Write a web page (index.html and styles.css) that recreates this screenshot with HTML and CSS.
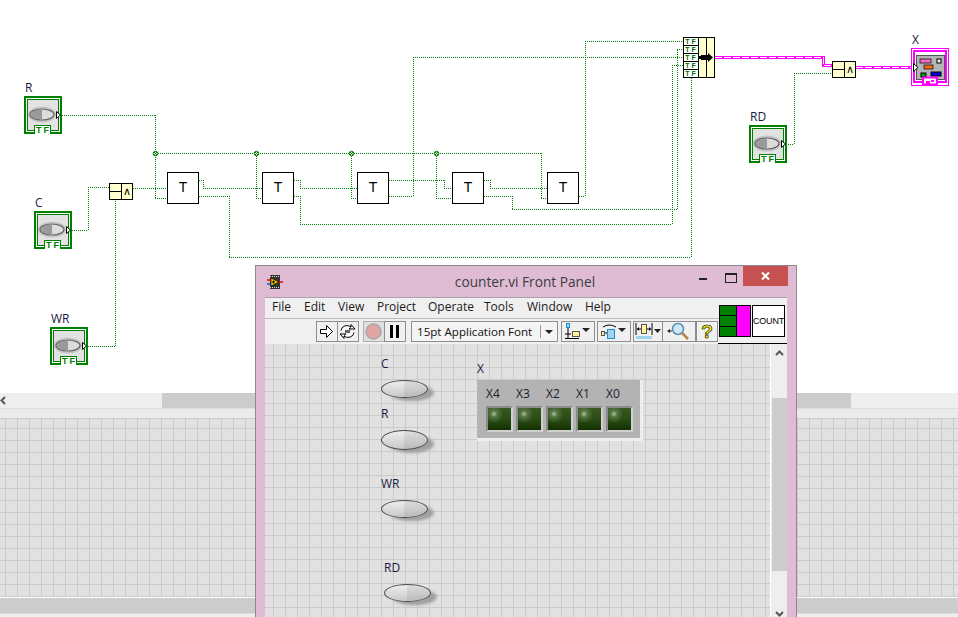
FILE: index.html
```html
<!DOCTYPE html>
<html lang="en">
<head>
<meta charset="utf-8">
<title>counter.vi Block Diagram</title>
<link rel="stylesheet" href="styles.css">
</head>
<body>
<svg class="defs" width="0" height="0" aria-hidden="true">
  <defs>
    <g id="bool-term">
      <rect x="1" y="1" width="36" height="36" fill="#fff" stroke="#008000" stroke-width="2"/>
      <rect x="3.500" y="3.500" width="31" height="31" fill="#e2e2e2" stroke="#008000"/>
      <ellipse cx="18" cy="18.500" rx="14" ry="8" fill="#bdbdbd" opacity=".8"/>
      <ellipse cx="18" cy="18.500" rx="12" ry="5.500" fill="#dcdcdc" stroke="#666" stroke-width="1.200"/>
      <path d="M18 13.500a11 5 0 0 0 0 10z" fill="#9a9a9a"/>
      <path d="M32.500 15.500l4 3.500-4 3.500z" fill="#fff" stroke="#000"/>
    </g>
    <g id="junction">
      <circle r="2.300" fill="#e8f4e8" stroke="#008000"/>
      <path d="M-1.500-1.500l3 3M1.500-1.500l-3 3" stroke="#008000" fill="none"/>
    </g>
  </defs>
</svg>

<main class="diagram">
  <svg class="wires" width="958" height="393" viewBox="0 0 958 393">
    <g class="wire">
      <path d="M62 115.500H155M155.500 115V198M155 198.500H167"/>
      <path d="M156 153.500H541M541.500 153V198M541 198.500H547"/>
      <path d="M256.500 156V198M256 198.500H262"/>
      <path d="M351.500 156V198M351 198.500H357"/>
      <path d="M436.500 156V198M436 198.500H452"/>
      <path d="M72 230.500H88M88.500 230V187M88 187.500H109"/>
      <path d="M88 346.500H115M115.500 346V200"/>
      <path d="M133 188.500H167"/>
      <path d="M199 180.500H203M203.500 180V188M203 188.500H262"/>
      <path d="M199 196.500H229M229.500 196V257M229 257.500H691M691.500 257V78"/>
      <path d="M294 180.500H300M300.500 180V188M300 188.500H357"/>
      <path d="M294 196.500H300M300.500 196V224M300 224.500H672M672.500 224V65M672 65.500H683"/>
      <path d="M389 180.500H444M444.500 180V188M444 188.500H452"/>
      <path d="M389 196.500H413M413.500 196V57M413 57.500H683"/>
      <path d="M484 180.500H490M490.500 180V188M490 188.500H547"/>
      <path d="M484 196.500H512M512.500 196V209M512 209.500H677M677.500 209V49M677 49.500H683"/>
      <path d="M579 196.500H585M585.500 196V41M585 41.500H683"/>
      <path d="M786 144.500H794M794.500 144V73M794 73.500H832"/>
    </g>
    <g class="cluster-wire">
      <path d="M715 57.500H823.500V65.500H832"/>
      <path d="M856 67.500H912"/>
    </g>
    <g class="cluster-wire-core">
      <path d="M715 57.500H823.500V65.500H832"/>
      <path d="M856 67.500H912"/>
    </g>
    <use href="#junction" x="155.500" y="153.500"/>
    <use href="#junction" x="256.500" y="153.500"/>
    <use href="#junction" x="351.500" y="153.500"/>
    <use href="#junction" x="436.500" y="153.500"/>
  </svg>

  <div class="node term term-r"><span class="node-label">R</span><svg width="38" height="38"><use href="#bool-term"/></svg><span class="tf-tag">TF</span></div>
  <div class="node term term-c"><span class="node-label">C</span><svg width="38" height="38"><use href="#bool-term"/></svg><span class="tf-tag">TF</span></div>
  <div class="node term term-wr"><span class="node-label">WR</span><svg width="38" height="38"><use href="#bool-term"/></svg><span class="tf-tag">TF</span></div>
  <div class="node term term-rd"><span class="node-label">RD</span><svg width="38" height="38"><use href="#bool-term"/></svg><span class="tf-tag">TF</span></div>

  <div class="node term term-x"><span class="node-label">X</span>
    <svg width="38" height="38">
      <rect x=".5" y=".5" width="37" height="37" fill="#fff" stroke="#f0f"/>
      <rect x="3" y="3" width="32" height="31" fill="#fff" stroke="#f0f" stroke-width="2"/>
      <rect x="5.500" y="7.500" width="28" height="24" fill="#b4b4b4" stroke="#555"/>
      <rect x="9" y="11" width="11" height="4" fill="#f06cc0" stroke="#000" stroke-width=".7"/>
      <rect x="13" y="17" width="9" height="4" fill="#f26a21" stroke="#000" stroke-width=".7"/>
      <rect x="26" y="11" width="4" height="4" fill="#eee" stroke="#000"/>
      <rect x="10" y="25" width="5" height="4" fill="#00a000" stroke="#000"/>
      <rect x="20" y="24" width="10" height="4" fill="#0000e0" stroke="#000"/>
      <rect x="12" y="29.500" width="14" height="7" fill="#fff" stroke="#f0f" stroke-width="2"/>
      <path d="M15 33h4v3h-4zM20 32h3v2h-3z" fill="#f0f"/>
      <path d="M2.500 15.500l4.500 4-4.500 4z" fill="#fff" stroke="#000"/>
    </svg>
  </div>

  <div class="node and and-1"><span class="and-inputs"><i></i><i></i></span><span class="and-op">∧</span></div>
  <div class="node and and-2"><span class="and-inputs"><i></i><i></i></span><span class="and-op">∧</span></div>

  <div class="node tff tff-1">T</div>
  <div class="node tff tff-2">T</div>
  <div class="node tff tff-3">T</div>
  <div class="node tff tff-4">T</div>
  <div class="node tff tff-5">T</div>

  <div class="node build">
    <div class="build-rows">
      <span>TF</span><span>TF</span><span>TF</span><span>TF</span><span>TF</span>
    </div>
    <div class="build-col"></div>
    <div class="build-col"></div>
    <svg class="build-arrow" width="16" height="9" viewBox="0 0 16 9"><path d="M0 3h3V2h7V0l5 4.500-5 4.500V7H3V6H0z" fill="#000"/></svg>
  </div>
</main>

<section class="back-window">
  <div class="hscroll top-scroll">
    <svg class="arrow-left" width="6" height="9" viewBox="0 0 6 9"><path d="M5 1L1.500 4.500 5 8" fill="none" stroke="#555" stroke-width="2"/></svg>
    <div class="thumb"></div>
  </div>
  <div class="band"></div>
  <div class="grid-lower"></div>
  <div class="hscroll bottom-scroll"></div>
</section>

<section class="window">
  <header class="titlebar">
    <svg class="vi-icon" width="16" height="14" viewBox="0 0 16 14">
      <path d="M3 0h10v14H3z" fill="#333"/>
      <path d="M3.500 1v1M5.500 1v1M7.500 1v1M9.500 1v1M11.500 1v1M3.500 12v1M5.500 12v1M7.500 12v1M9.500 12v1M11.500 12v1" stroke="#ddd"/>
      <path d="M4 3l8 4-8 4z" fill="#f5d800" stroke="#000" stroke-width=".7"/>
      <path d="M0 5h4" stroke="#e00" stroke-width="1.500"/>
      <path d="M0 9h4" stroke="#15c" stroke-width="1.500"/>
      <path d="M12 7h4" stroke="#e00" stroke-width="1.500"/>
      <path d="M5 7h3M6.500 5.500v3" stroke="#000"/>
    </svg>
    <h1 class="title">counter.vi Front Panel</h1>
    <div class="win-controls">
      <span class="win-min"></span>
      <span class="win-max"></span>
      <span class="win-close"><svg width="11" height="10" viewBox="0 0 11 10"><path d="M2 1.500l7 7M9 1.500l-7 7" stroke="#fff" stroke-width="2" fill="none"/></svg></span>
    </div>
  </header>

  <div class="client">
    <nav class="menubar">
      <span>File</span><span>Edit</span><span>View</span><span>Project</span><span>Operate</span><span>Tools</span><span>Window</span><span>Help</span>
    </nav>

    <div class="toolbar">
      <div class="tool-group">
        <button class="tool">
          <svg width="15" height="15" viewBox="0 0 15 15"><path d="M1.500 5.500h6v-4l6 6-6 6v-4h-6z" fill="#fff" stroke="#000"/></svg>
        </button>
        <button class="tool">
          <svg width="19" height="17" viewBox="0 0 19 17"><path d="M3 7.500a6 5.500 0 0 1 10-3.500V1.500l4 4.500h-6l2-1.500" fill="#fff" stroke="#000"/><path d="M16 9.500a6 5.500 0 0 1-10 3.500v2.500l-4-4.500h6l-2 1.500" fill="#fff" stroke="#000"/><path d="M7 7h5v3H7z" fill="#666"/></svg>
        </button>
      </div>
      <div class="tool-group">
        <button class="tool tool-off">
          <svg width="17" height="17" viewBox="0 0 17 17"><circle cx="8.500" cy="8.500" r="7.500" fill="#e2a4a4" stroke="#a8a8a8" stroke-width="1.500"/></svg>
        </button>
        <button class="tool">
          <svg width="11" height="13" viewBox="0 0 11 13"><path d="M1 0h3v13H1zM7 0h3v13H7z" fill="#000"/></svg>
        </button>
      </div>
      <div class="font-ring">
        <span class="font-name">15pt Application Font</span>
        <span class="font-drop"><svg width="8" height="4" viewBox="0 0 8 4"><path d="M0 0h8L4 4z" fill="#222"/></svg></span>
      </div>
      <button class="tool tool-wide">
        <svg width="28" height="19" viewBox="0 0 28 19"><rect x="2.500" y="1.500" width="3" height="4" fill="#9fd4ee" stroke="#1a8fc9"/><path d="M4 6v10M1 12h6M1 16.500h14" stroke="#000"/><rect x="8.500" y="9.500" width="7" height="5" fill="#fff49a" stroke="#555"/><path d="M18 6h8l-4 4z" fill="#222"/></svg>
      </button>
      <button class="tool tool-wide">
        <svg width="28" height="19" viewBox="0 0 28 19"><path d="M3 5q6-4 13 0" stroke="#000" fill="none"/><rect x="1.500" y="9.500" width="3" height="4" fill="#fff49a" stroke="#555"/><rect x="7.500" y="7.500" width="7" height="9" fill="#9fd4ee" stroke="#1a8fc9"/><path d="M5 11h2" stroke="#000"/><path d="M18 6h8l-4 4z" fill="#222"/></svg>
      </button>
      <div class="tool-group">
        <button class="tool tool-resize">
          <svg width="26" height="19" viewBox="0 0 26 19"><path d="M1 1v12M17 1v12" stroke="#000"/><rect x="6.500" y="2.500" width="5" height="9" fill="#fff49a" stroke="#555"/><path d="M2 7h4M12 7h4" stroke="#000"/><path d="M2 7l2-2v4zM16 7l-2-2v4z" fill="#000"/><rect x="1" y="14" width="16" height="3" fill="#9fd4ee"/><path d="M19 7h7l-3.500 4z" fill="#222"/></svg>
        </button>
        <button class="tool tool-search">
          <svg width="24" height="19" viewBox="0 0 24 19"><path d="M0 9l3-2v4z" fill="#222"/><path d="M3 9h2" stroke="#222"/><circle cx="11" cy="7" r="5.500" fill="#cfe6f7" stroke="#5a8db0" stroke-width="1.500"/><path d="M15 11l6 6" stroke="#b8824a" stroke-width="2.500"/></svg>
        </button>
        <button class="tool tool-help">
          <span class="help-mark">?</span>
        </button>
      </div>
    </div>

    <div class="connector">
      <div class="pane">
        <div class="pane-cells"><i></i><i></i><i></i></div>
        <div class="pane-out"></div>
      </div>
      <div class="vi-name">COUNT</div>
    </div>

    <div class="panel">
      <div class="panel-grid">
        <div class="switch sw-c"><label>C</label><span class="oval"></span></div>
        <div class="switch sw-r"><label>R</label><span class="oval"></span></div>
        <div class="switch sw-wr"><label>WR</label><span class="oval"></span></div>
        <div class="switch sw-rd"><label>RD</label><span class="oval"></span></div>
        <div class="cluster-wrap">
          <label>X</label>
          <div class="cluster">
            <div class="led-cell"><span>X4</span><i class="led"></i></div>
            <div class="led-cell"><span>X3</span><i class="led"></i></div>
            <div class="led-cell"><span>X2</span><i class="led"></i></div>
            <div class="led-cell"><span>X1</span><i class="led"></i></div>
            <div class="led-cell"><span>X0</span><i class="led"></i></div>
          </div>
        </div>
      </div>
      <div class="vscroll">
        <svg width="9" height="6" viewBox="0 0 9 6"><path d="M1 5l3.500-3.500L8 5" fill="none" stroke="#555" stroke-width="2"/></svg>
        <div class="vthumb"></div>
        <svg width="9" height="6" viewBox="0 0 9 6"><path d="M1 1l3.500 3.500L8 1" fill="none" stroke="#555" stroke-width="2"/></svg>
      </div>
    </div>
  </div>
</section>
</body>
</html>
```
FILE: styles.css
```css
* { box-sizing: border-box; }
html, body { margin: 0; padding: 0; }
body {
  position: relative;
  width: 958px;
  height: 617px;
  overflow: hidden;
  background: #fff;
  font-family: "Open Sans", "Noto Sans", sans-serif;
  font-size: 12px;
  color: #1c1c2c;
}
.defs { position: absolute; }

/* Block diagram: a free canvas */
.diagram { position: relative; height: 393px; }
.wires { position: absolute; left: 0; top: 0; }
.wire path { fill: none; stroke: #008000; stroke-width: 1; stroke-dasharray: 1 1; shape-rendering: crispEdges; }
.cluster-wire path { fill: none; stroke: #f0f; stroke-width: 3; shape-rendering: crispEdges; }
.cluster-wire-core path { fill: none; stroke: #fff; stroke-width: 1; stroke-dasharray: 7 2; shape-rendering: crispEdges; }

.node { position: absolute; }
.term { width: 38px; height: 38px; }
.term svg { display: block; }
.term-r { left: 24px; top: 96px; }
.term-c { left: 34px; top: 211px; }
.term-wr { left: 50px; top: 327px; }
.term-rd { left: 749px; top: 125px; }
.term-x { left: 911px; top: 48px; }
.node-label { position: absolute; left: 1px; top: -16px; line-height: 16px; color: #1a1a40; }
.tf-tag {
  position: absolute; left: 10px; top: 29px; width: 17px; height: 9px;
  background: #fff; border: 1px solid #008000; border-bottom: 0;
  font: bold 9px/8px "Liberation Sans", sans-serif; letter-spacing: 2px; text-align: center; color: #008000;
  padding-left: 1px;
}

.and {
  display: flex; width: 24px; height: 17px;
  background: #ffffcf; border: 1px solid #000;
}
.and-1 { left: 109px; top: 183px; }
.and-2 { left: 832px; top: 61px; }
.and-inputs { display: flex; flex-direction: column; width: 12px; border-right: 1px solid #000; }
.and-inputs i { flex: 1; }
.and-inputs i + i { border-top: 1px solid #000; }
.and-op { flex: 1; text-align: center; font: 11px/15px "DejaVu Sans", sans-serif; color: #000; }

.tff {
  width: 32px; height: 32px;
  background: #fff; border: 1px solid #000;
  font: 14px/29px "Liberation Sans", sans-serif; text-align: center; color: #000;
  top: 172px;
}
.tff-1 { left: 167px; }
.tff-2 { left: 262px; }
.tff-3 { left: 357px; }
.tff-4 { left: 452px; }
.tff-5 { left: 547px; }

.build {
  left: 683px; top: 37px; width: 32px; height: 41px;
  display: flex; border: 1px solid #000; background: #ffffcf;
}
.build-rows { display: flex; flex-direction: column; width: 15px; border-right: 1px solid #000; background: #fff; }
.build-rows span {
  height: 8px;
  font: bold 7px/7px "Liberation Sans", sans-serif; letter-spacing: 2px; text-align: center; color: #007000;
  border-bottom: 1px solid #000;
  padding-left: 1px;
}
.build-rows span:last-child { border-bottom: 0; height: 7px; }
.build-col { flex: 1; }
.build-col + .build-col { border-left: 1px solid #000; }
.build-arrow { position: absolute; left: 14px; top: 15px; }

/* Window behind the front panel */
.hscroll { display: flex; align-items: stretch; height: 15px; background: #eee; }
.top-scroll { position: relative; }
.top-scroll .thumb { margin-left: 162px; width: 689px; background: #ccc; }
.arrow-left { position: absolute; left: 0; top: 3px; }
.band { height: 10px; background: #ebebeb; border-top: 1px solid #ddd; }
.grid-lower {
  height: 180px;
  border-top: 1px solid #cacaca;
  background-color: #e1e1e1;
  background-image: linear-gradient(to right, #cacaca 1px, transparent 1px), linear-gradient(to bottom, #cacaca 1px, transparent 1px);
  background-size: 12px 12px;
  background-position: 5px 9px;
  border-bottom: 1px solid #fff;
}
.bottom-scroll { background: #ccc; border-bottom: 1px solid #ddd; height: 16px; }
.back-window { height: 224px; background: #eee; overflow: hidden; }

/* Front panel window */
.window {
  position: absolute; left: 255px; top: 265px; width: 542px; height: 352px;
  display: flex; flex-direction: column;
  background: #dfbcd4;
  border: 1px solid #8f8790; border-bottom: 0;
}
.titlebar { position: relative; display: flex; align-items: center; justify-content: center; height: 31px; flex: none; }
.vi-icon { position: absolute; left: 11px; top: 9px; }
.title { margin: 0; font-weight: 400; font-size: 13.700px; color: #3c3c3c; line-height: 31px; position: relative; left: -1px; }
.win-controls { position: absolute; right: 8px; top: 0; display: flex; }
.win-min { position: relative; width: 26px; height: 20px; }
.win-min::after { content: ""; position: absolute; left: 0; top: 12px; width: 8px; height: 2px; background: #222; }
.win-max { position: relative; width: 18px; height: 20px; }
.win-max::after { content: ""; position: absolute; left: 0; top: 7px; width: 10px; height: 7px; border: 1px solid #222; border-top-width: 2px; }
.win-close { display: flex; align-items: center; justify-content: center; width: 45px; height: 20px; background: #c75050; }

.client {
  position: relative; flex: 1; min-height: 0; display: flex; flex-direction: column;
  margin: 0 9px; background: #f0f0f0; border-top: 1px solid #a9a2a9;
}
.menubar {
  display: grid;
  grid-template-columns: 32px 34px 39px 51px 56px 43px 58px 40px;
  height: 21px; flex: none; padding-left: 7px;
  line-height: 18px; color: #1a1a1a;
  border-bottom: 1px solid #bcbcbc;
  margin-right: 68px;
}
.toolbar { display: flex; gap: 4px; height: 24px; flex: none; padding: 2px 0 0 51px; align-items: flex-start; }
.tool-group { display: flex; }
.tool {
  display: flex; align-items: center; justify-content: center;
  width: 21.500px; height: 21px; padding: 0; margin: 0;
  background: #f0f0f0; border: 1px solid #8e8e8e;
}
.tool-group .tool + .tool { margin-left: -1px; width: 22.500px; }
.tool-off { background: #e0e0e0; border-color: #b0b0b0; }
.tool-wide { width: 34px; margin-right: -2px; }
.tool.tool-resize { width: 30px; }
.tool-group .tool.tool-search { width: 34px; }
.tool-group .tool.tool-help { width: 22px; margin-left: 0; }
.help-mark {
  font: bold 19px/20px "Liberation Sans", sans-serif; color: #f9e600;
  -webkit-text-stroke: .6px #000;
}
.font-ring {
  display: flex; align-items: center; width: 147px; height: 21px; margin-left: 1px; margin-right: -1px;
  background: #f4f4f4; border: 1px solid #8e8e8e; line-height: 19px; color: #111;
}
.font-name { width: 128px; padding-left: 5px; white-space: nowrap; font-size: 11.600px; }
.font-drop { display: flex; flex: 1; height: 13px; align-items: center; justify-content: center; border-left: 1px solid #999; }

.connector {
  position: absolute; right: 2px; top: 7px; display: flex; gap: 1px; height: 32px; width: 66px;
}
.pane { display: flex; width: 32px; background: #000; padding: 1px; gap: 1px; }
.pane-cells { display: flex; flex-direction: column; gap: 1px; width: 16px; }
.pane-cells i { flex: 1; background: #008000; }
.pane-out { flex: 1; background: #f0f; }
.vi-name {
  flex: 1; background: #fff; border: 1px solid #000;
  font: 9px/30px "Liberation Sans", sans-serif; color: #000; text-align: center; letter-spacing: -.2px;
}

.panel { position: relative; flex: 1; min-height: 0; display: flex; border-top: 1px solid transparent; }
.panel::before { content: ""; position: absolute; left: 453px; right: 0; top: -1px; height: 1px; background: #000; }
.panel-grid {
  position: relative; flex: 1;
  background-color: #e1e1e1;
  background-image: linear-gradient(to right, #cacaca 1px, transparent 1px), linear-gradient(to bottom, #cacaca 1px, transparent 1px);
  background-size: 12px 12px;
  background-position: 8px 11px;
}
.vscroll {
  width: 17px; flex: none; display: flex; flex-direction: column; align-items: center;
  background: #eee; border-left: 1px solid #fff; padding-top: 6px;
}
.vthumb { width: 15px; height: 174px; margin: 42px 0 40px; background: #ccc; }

.switch { position: absolute; width: 50px; height: 60px; }
.switch label { display: block; padding-top: 1px; line-height: 16px; color: #1a1a40; }
.oval {
  position: absolute; left: 0; width: 47px; height: 18px; border-radius: 50%;
  background: linear-gradient(to right, transparent 50%, rgba(0,0,0,.07) 50%), linear-gradient(to bottom, #eee, #c8c8c8);
  border: 1.500px solid #4a4a4a;
  box-shadow: 7px 4px 3px -1px #a0a0a0;
}
.sw-c { left: 116px; top: 11px; }
.sw-c .oval { top: 25px; }
.sw-r { left: 116px; top: 61px; }
.sw-r .oval { top: 25px; height: 20px; }
.sw-wr { left: 116px; top: 131px; }
.sw-wr .oval { top: 25px; }
.sw-rd { left: 119px; top: 215px; }
.sw-rd .oval { top: 25px; }

.cluster-wrap { position: absolute; left: 212px; top: 16px; }
.cluster-wrap label { display: block; padding-top: 1px; line-height: 16px; height: 20px; color: #1a1a40; }
.cluster {
  display: grid; grid-template-columns: repeat(5, 30px);
  width: 166px; height: 61px; padding: 6px 0 0 9px;
  background: #b3b3b3;
  border-right: 3px solid #eee; border-bottom: 3px solid #eee;
}
.led-cell span { display: block; height: 20px; line-height: 16px; color: #1c1c2c; }
.led {
  display: block; width: 27px; height: 26px;
  border: 2px solid; border-color: #8c8c8c #d0d0d0 #d0d0d0 #8c8c8c;
  background:
    radial-gradient(circle at 6px 6px, rgba(200,215,190,.85) 0, rgba(120,150,105,.5) 14%, transparent 40%),
    linear-gradient(to bottom, #37581f, #2a4c14 50%, #123000);
}
```
